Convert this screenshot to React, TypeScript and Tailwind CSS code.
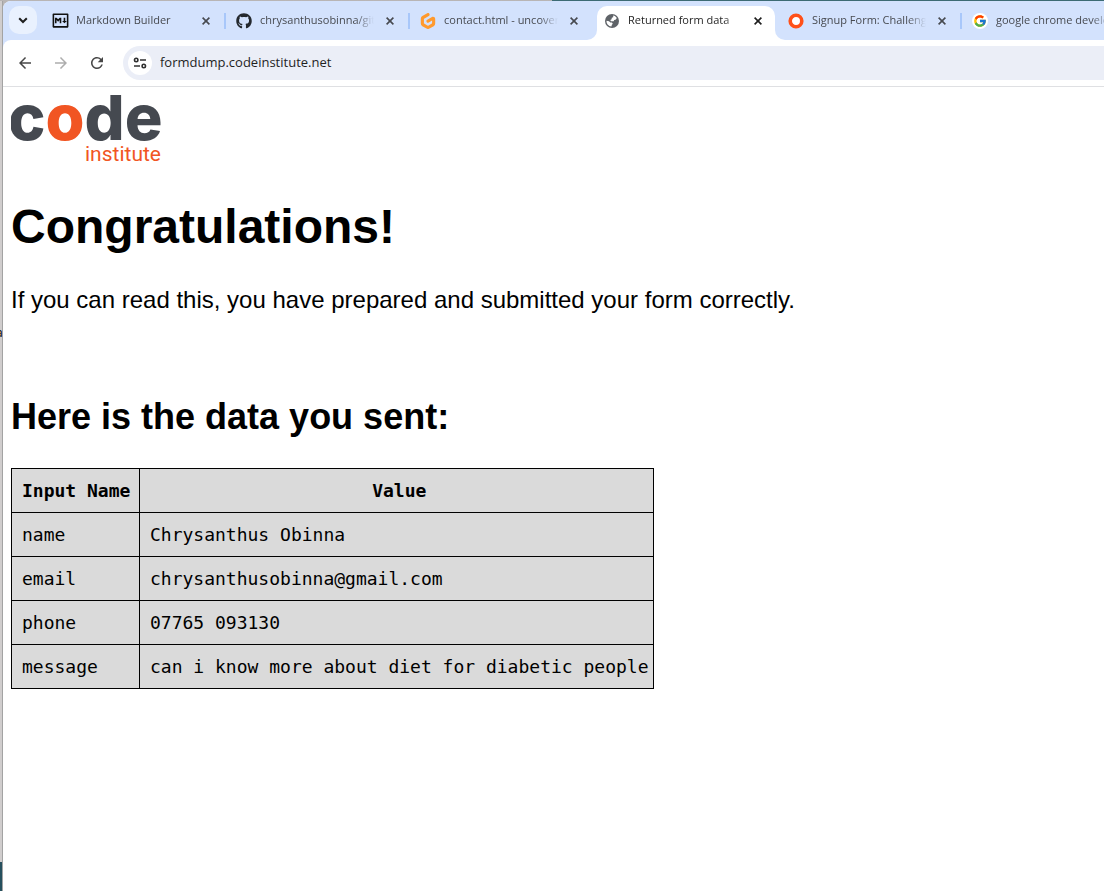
import type { ReactNode } from "react";
import { SiGitpod } from "react-icons/si";
import { FaGithub } from "react-icons/fa";
import { FcGoogle } from "react-icons/fc";
import { RiMarkdownLine } from "react-icons/ri";
import { MdArrowBack, MdArrowForward, MdRefresh } from "react-icons/md";

type TabInfo = { title: string; icon: ReactNode; active?: boolean; divider?: boolean };

const tabs: TabInfo[] = [
  { title: "Markdown Builder", icon: <RiMarkdownLine className="size-[19px] shrink-0" color="#111" />, divider: true },
  { title: "chrysanthusobinna/github", icon: <FaGithub size={16} color="#24292f" />, divider: true },
  { title: "contact.html - uncovered", icon: <SiGitpod size={16} color="#ff9a2e" /> },
  {
    title: "Returned form data",
    icon: (
      <svg viewBox="0 0 14 14" className="size-[14px]">
        <circle cx="7" cy="7" r="7" fill="#5f6368" />
        <path
          d="M8.200 1.500c1.600.2 3.200 1.400 3.900 3l-1 .1-.4 1.200-1.500.2-.5 1.200H5.900L5.300 6 6.600 5.300l.2-1.500 1.400-.6zM1.500 6.800 4 7.200l1.300 1.300h1.600l.9 1.200-.9 1.100-.5 1.700C3.600 12.300 1.300 9.800 1.500 6.800z"
          fill="#fff"
        />
      </svg>
    ),
    active: true,
  },
  {
    title: "Signup Form: Challenge",
    icon: (
      <svg viewBox="0 0 16 16" className="size-4">
        <circle cx="8" cy="8" r="5.8" fill="#fff" stroke="#ff5019" strokeWidth="3.6" />
      </svg>
    ),
    divider: true,
  },
  {
    title: "google chrome developer tools",
    icon: (
      <span className="flex size-4 items-center justify-center rounded-full bg-white">
        <FcGoogle size={14} />
      </span>
    ),
  },
];

const rows = [
  ["name", "Chrysanthus Obinna"],
  ["email", "chrysanthusobinna@gmail.com"],
  ["phone", "07765 093130"],
  ["message", "can i know more about diet for diabetic people"],
];

function Tab({ title, icon, active, divider }: TabInfo) {
  return (
    <li
      className={`relative flex h-[34px] w-[184px] shrink-0 items-center pr-3 pb-[5px] pl-[10px] ${active ? "text-[#1f1f1f]" : "text-[#474a50]"}`}
    >
      {active && (
        <span className="absolute inset-x-[3px] inset-y-0 rounded-t-[10px] bg-white">
          <span className="absolute bottom-0 -left-[10px] size-[10px] bg-white">
            <span className="block size-full rounded-br-[10px] bg-[#d3e2fd]" />
          </span>
          <span className="absolute -right-[10px] bottom-0 size-[10px] bg-white">
            <span className="block size-full rounded-bl-[10px] bg-[#d3e2fd]" />
          </span>
        </span>
      )}
      <a href="#" className="relative flex min-w-0 flex-1 items-center gap-2">
        <span className="flex size-4 shrink-0 items-center justify-center">{icon}</span>
        <span className="w-[114px] overflow-hidden whitespace-nowrap [mask-image:linear-gradient(to_right,#000_84%,transparent)]">
          {title}
        </span>
      </a>
      <button type="button" aria-label="Close tab" className="relative flex size-4 items-center justify-center">
        <svg viewBox="0 0 8 8" className="size-2" stroke="currentColor" strokeWidth="1.6">
          <path d="m.6.6 6.800 6.800M7.400.6.6 7.400" />
        </svg>
      </button>
      {divider && <span className="absolute right-0 h-4 w-[2px] bg-[#a8c7fa]" />}
    </li>
  );
}

function Toolbar() {
  return (
    <div className="flex h-[47px] items-center rounded-tl-lg border-b border-[#dfe0e3] bg-white text-[#474747]">
      <nav className="flex items-center gap-[18px] pl-[13px]">
        <button type="button" aria-label="Back">
          <MdArrowBack size={18} />
        </button>
        <button type="button" aria-label="Forward" className="text-[#adadad]">
          <MdArrowForward size={18} />
        </button>
        <button type="button" aria-label="Reload">
          <MdRefresh size={18} />
        </button>
      </nav>
      <div className="ml-[17px] flex h-[34px] min-w-0 flex-1 items-center gap-2 rounded-l-full bg-[#ebeef7] pl-[5px]">
        <button
          type="button"
          aria-label="Site information"
          className="flex size-6 items-center justify-center rounded-full bg-white"
        >
          <svg viewBox="0 0 14 14" className="size-[14px]" fill="none" stroke="#303030" strokeWidth="1.6">
            <circle cx="3.2" cy="4" r="1.7" />
            <path d="M7 4h6M1 10h6" />
            <circle cx="10.8" cy="10" r="1.7" />
          </svg>
        </button>
        <input
          aria-label="Address"
          defaultValue="formdump.codeinstitute.net"
          className="min-w-0 flex-1 bg-transparent text-[13px] text-[#1f1f1f] outline-none"
        />
      </div>
    </div>
  );
}

function Logo() {
  return (
    <svg viewBox="0 0 152 68" className="h-[68px] w-[152px]" role="img" aria-label="code institute">
      <text x="-3" y="45" fontFamily="Inter, sans-serif" fontWeight="800" fontSize="63" fill="#454950">
        c<tspan fill="#f15523">o</tspan>de
      </text>
      <text x="74" y="66" fontFamily="Roboto, sans-serif" fontSize="21" fill="#f15523">
        institute
      </text>
    </svg>
  );
}

export default function App() {
  return (
    <div className="flex min-h-screen overflow-hidden bg-linear-to-r from-[#b8b5b5] from-50% to-[#3d6b74] to-50% pt-px font-['Open_Sans',sans-serif] text-[11px]">
      <aside className="flex w-[3px] shrink-0 flex-col justify-between overflow-hidden border-r border-[#a3a3a3] bg-[#d0cdcd]">
        <span className="mt-[324px] -ml-[4px] text-xs">a</span>
        <span className="h-[29px] bg-[#26505e]" />
      </aside>
      <div className="min-w-0 flex-1 overflow-hidden rounded-tl-lg bg-white">
        <header className="bg-[#d3e2fd]">
          <div className="flex h-[39px] items-end">
            <button
              type="button"
              aria-label="Search tabs"
              className="mr-[5px] mb-[6px] ml-[6px] flex size-7 shrink-0 items-center justify-center rounded-[10px] bg-[#e9f1fe]"
            >
              <svg viewBox="0 0 10 10" className="size-[10px]" fill="none" stroke="#1f1f1f" strokeWidth="2">
                <path d="M1.2 3.2 5 7l3.800-3.800" />
              </svg>
            </button>
            <ul className="flex">
              {tabs.map((tab) => (
                <Tab key={tab.title} {...tab} />
              ))}
            </ul>
          </div>
          <Toolbar />
        </header>
        <main className="p-2 font-['Liberation_Sans',Arial,sans-serif] text-2xl text-black">
          <Logo />
          <h1 className="mt-9 text-[48px] leading-[56px] font-bold">Congratulations!</h1>
          <p className="mt-[31px] leading-7">
            If you can read this, you have prepared and submitted your form correctly.
          </p>
          <h2 className="mt-[82px] text-[36px] leading-[42px] font-bold">Here is the data you sent:</h2>
          <table className="mt-[30px] border-collapse bg-[#dadada] font-['DejaVu_Sans_Mono',monospace] text-[18px] leading-[23px]">
            <thead>
              <tr>
                <th className="min-w-[128px] border border-black py-[10px] pr-1 pl-[10px] text-left">Input Name</th>
                <th className="border border-black py-[10px] pr-1 pl-[10px]">Value</th>
              </tr>
            </thead>
            <tbody>
              {rows.map(([name, value]) => (
                <tr key={name}>
                  <td className="border border-black py-[10px] pr-1 pl-[10px]">{name}</td>
                  <td className="border border-black py-[10px] pr-1 pl-[10px] whitespace-nowrap">{value}</td>
                </tr>
              ))}
            </tbody>
          </table>
        </main>
      </div>
    </div>
  );
}
